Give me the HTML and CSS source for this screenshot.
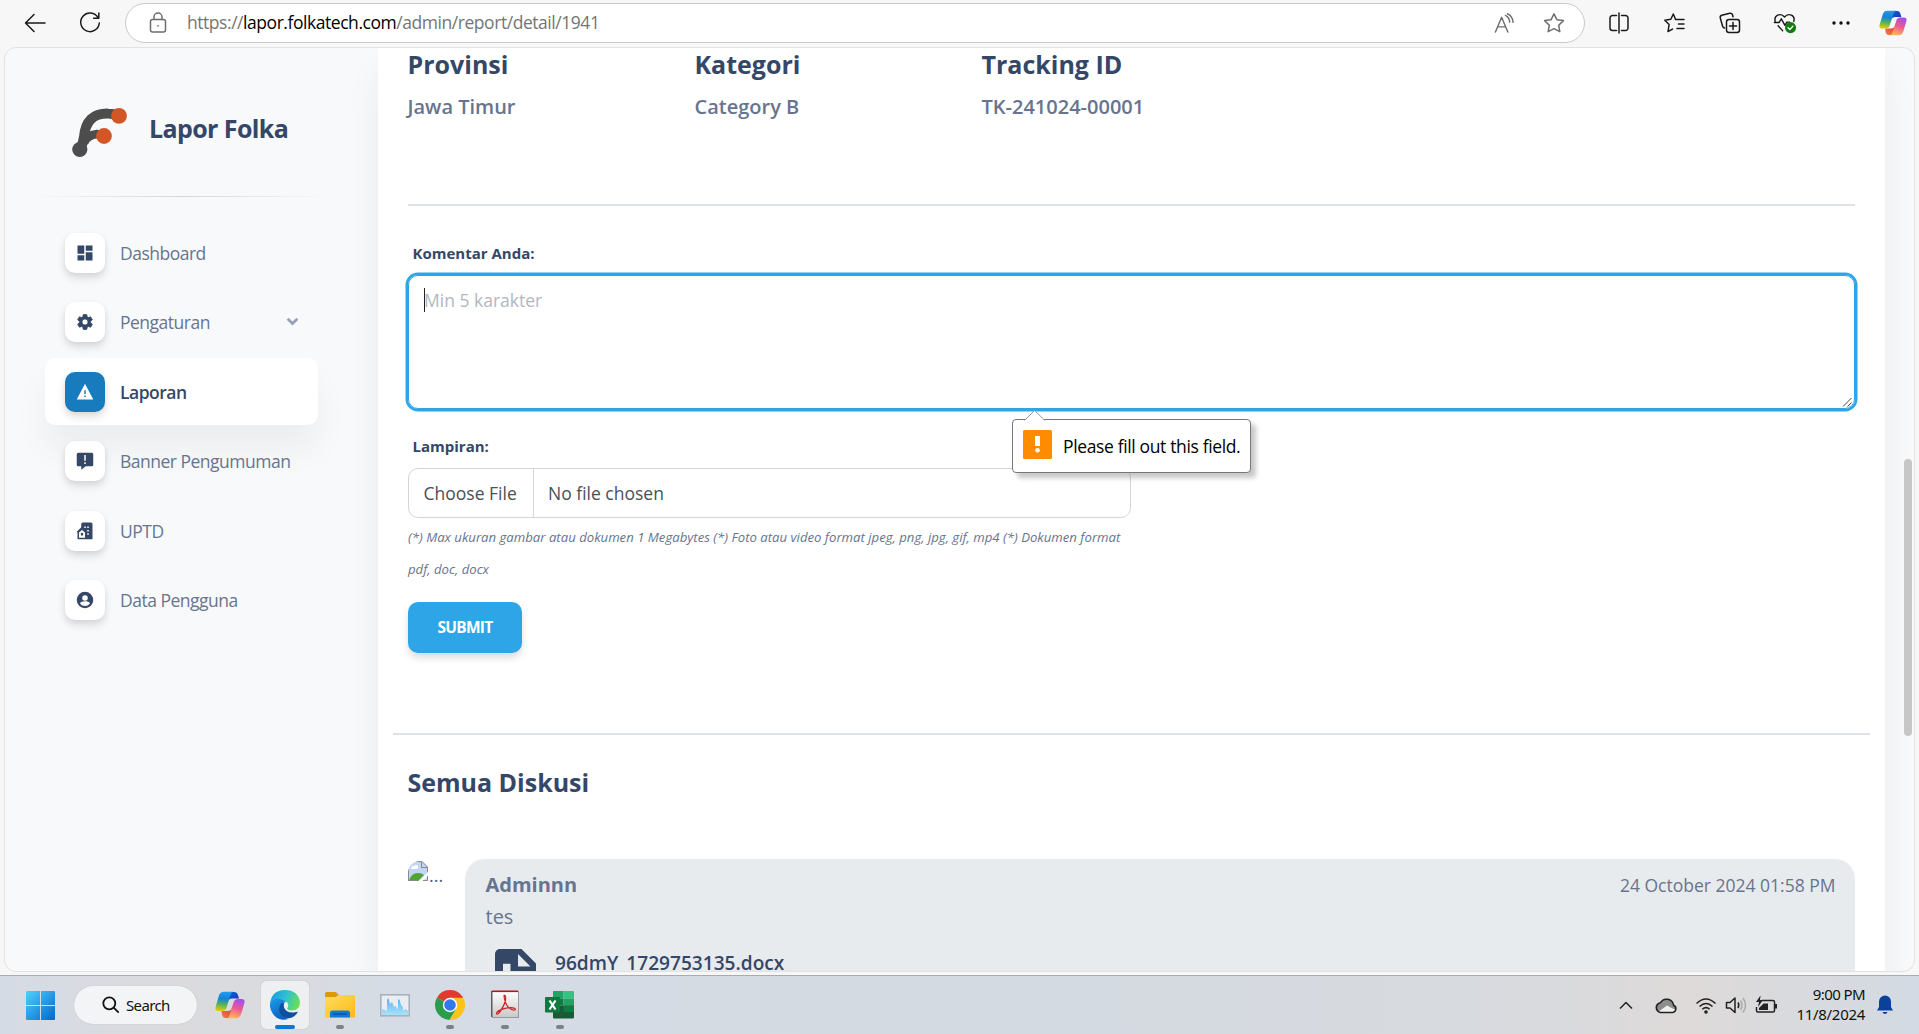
FILE: index.html
```html
<!DOCTYPE html>
<html lang="id">
<head>
<meta charset="utf-8">
<title>Lapor Folka</title>
<link rel="stylesheet" href="styles.css">
</head>
<body>
<svg class="defs" width="0" height="0">
  <defs>
    <linearGradient id="cpA" x1="0.3" y1="0" x2="0.2" y2="1"><stop offset="0" stop-color="#1a9bf0"/><stop offset=".35" stop-color="#1583d8"/><stop offset=".65" stop-color="#52b45c"/><stop offset="1" stop-color="#f6c900"/></linearGradient>
    <linearGradient id="cpB" x1="0.7" y1="0" x2="0.4" y2="1"><stop offset="0" stop-color="#a04df0"/><stop offset=".5" stop-color="#ee5a90"/><stop offset="1" stop-color="#ffb657"/></linearGradient>
    <linearGradient id="cpC" x1="0" y1="0" x2="1" y2="1"><stop offset="0" stop-color="#0d63d6"/><stop offset="1" stop-color="#1b2fb5"/></linearGradient>
    <linearGradient id="cpD" x1="0" y1="1" x2="1" y2="0"><stop offset="0" stop-color="#f7803c"/><stop offset="1" stop-color="#e0393f"/></linearGradient>
    <linearGradient id="win" x1="0" y1="0" x2="1" y2="1"><stop offset="0" stop-color="#50d0ff"/><stop offset="1" stop-color="#0068cc"/></linearGradient>
    <linearGradient id="edA" x1="0" y1="0.3" x2="1" y2="0.6"><stop offset="0" stop-color="#1d9be0"/><stop offset=".5" stop-color="#2fc1cf"/><stop offset="1" stop-color="#6ee04e"/></linearGradient>
    <linearGradient id="edB" x1="0" y1="0" x2="0.5" y2="1"><stop offset="0" stop-color="#1c9bea"/><stop offset="1" stop-color="#0a62c0"/></linearGradient>
    <linearGradient id="fold" x1="0" y1="0" x2="1" y2="1"><stop offset="0" stop-color="#ffdc62"/><stop offset="1" stop-color="#fdbb14"/></linearGradient>
    <linearGradient id="perf" x1="0" y1="0" x2="0" y2="1"><stop offset="0" stop-color="#55b4ee"/><stop offset="1" stop-color="#a9e2fb"/></linearGradient>
    <linearGradient id="pdf" x1="0" y1="0" x2="0" y2="1"><stop offset="0" stop-color="#fff"/><stop offset="1" stop-color="#c9c9c9"/></linearGradient>
    <symbol id="copilot" viewBox="0 0 30 28">
      <path d="M15 1h4.500q2.500 0 3.300 2.600l1.200 4H17q-3 0-4 3z" fill="url(#cpC)"/>
      <path d="M15 27h-4.500q-2.500 0-3.300-2.600L6.500 20H13q3 0 4-3z" fill="url(#cpD)"/>
      <path d="M9 .8h9.500q-2 0-3 3.200l-4 12.500q-1 3.500-4.500 3.500H3.500Q-.3 20 .6 16L4 4.500Q5.200.8 9 .8z" fill="url(#cpA)"/>
      <path d="M21 27.200h-9.500q2 0 3-3.200l4-12.500Q19.500 8 23 8h3.500q3.800 0 2.900 4L26 23.500q-1.200 3.700-5 3.700z" fill="url(#cpB)"/>
    </symbol>
  </defs>
</svg>

<header class="toolbar">
  <svg class="tb-back" viewBox="0 0 24 24"><path d="M22 12H3M11 3.500L2.500 12l8.500 8.500"/></svg>
  <svg class="tb-reload" viewBox="0 0 24 24"><path d="M20 6.500A9.300 9.300 0 1 0 21.300 12M20.800 2v5.200h-5.200"/></svg>
  <div class="address">
    <svg class="lock" viewBox="0 0 18 22"><rect x="1.500" y="7.500" width="15" height="12.500" rx="2"/><path d="M5 7.500V5a4 4 0 0 1 8 0v2.500"/><circle cx="9" cy="13.800" r=".9" class="dot"/></svg>
    <span class="url">https://<b>lapor.folkatech.com</b>/admin/report/detail/1941</span>
    <svg class="read" viewBox="0 0 22 22"><path d="M1.500 20L8 4.500 14.500 20M4 14.500h8M12 2.500q4 2 4.500 7M14 .8q5.500 2.200 6 9"/></svg>
    <svg class="star" viewBox="0 0 22 22"><path d="M11 1.800l2.900 5.900 6.500.9-4.700 4.600 1.100 6.500-5.800-3-5.800 3 1.100-6.500L1.600 8.600l6.500-.9z"/></svg>
  </div>
  <nav class="tb-tools">
    <svg viewBox="0 0 24 24"><path d="M9.500 4.500H5.500a2.500 2.500 0 0 0-2.500 2.500v10a2.500 2.500 0 0 0 2.500 2.500h4M14.500 4.500h4a2.500 2.500 0 0 1 2.500 2.500v10a2.500 2.500 0 0 1-2.500 2.500h-4M12 2v20"/></svg>
    <svg viewBox="0 0 24 24"><path d="M13.500 8.500H22M16.500 13H22M15 17.500h7M14 8.500h-.4L11.300 3 8.800 8.300l-6 .9 4.300 4.300L6 20.500l4.500-2.400"/></svg>
    <svg viewBox="0 0 24 24"><rect x="8.500" y="8.500" width="13" height="13" rx="2.500"/><path d="M15 11.500v7M11.500 15h7M6.500 17q-1.500-.3-2-2L2.300 7q-.5-2 1.500-2.700l8-2.100q2-.4 2.700 1.600l.5 2"/></svg>
    <svg viewBox="0 0 26 24"><path d="M2.500 11Q1 5.500 5 3.500q4.500-1.700 7.500 2 3-3.700 7.500-2 4 2 2.500 7M1.500 11.500h5l2.500-4 4 7 2-3.500h3M5.500 15l5 5.500"/><circle cx="19" cy="17" r="6" fill="#107c10" stroke="none"/><path d="M16.300 17.200l2 1.800 3.300-3.600" stroke="#fff"/></svg>
    <svg viewBox="0 0 24 24"><g fill="#111" stroke="none"><circle cx="5" cy="12" r="1.700"/><circle cx="12" cy="12" r="1.700"/><circle cx="19" cy="12" r="1.700"/></g></svg>
    <svg class="tb-copilot" viewBox="0 0 30 28"><use href="#copilot"/></svg>
  </nav>
</header>

<div class="page">
  <aside class="sidebar">
    <div class="brand">
      <svg viewBox="0 0 56 54"><path d="M8 42Q11 37 12 30Q14 6 36 6.500Q41 6.500 46 9" stroke-width="10"/><path d="M12 36Q15 28 25 27L30 28" stroke-width="8.500"/><circle cx="7.800" cy="42.500" r="7.600" fill="#4d4d4d"/><circle cx="47" cy="8.800" r="7.900" fill="#d35626"/><circle cx="32" cy="29" r="7.900" fill="#d35626"/></svg>
      <span>Lapor Folka</span>
    </div>
    <div class="side-rule"></div>
    <ul class="menu">
      <li><i><svg viewBox="0 0 24 24"><path d="M2 13h9V2H2zM2 22h9v-7H2zM13 22h9V11h-9zM13 2v7h9V2z"/></svg></i><span>Dashboard</span></li>
      <li><i><svg viewBox="0 0 24 24"><path d="M19.430 12.980c.04-.32.07-.64.07-.98s-.03-.66-.07-.98l2.110-1.650a.5.5 0 0 0 .12-.64l-2-3.460a.5.5 0 0 0-.61-.22l-2.490 1a7.300 7.300 0 0 0-1.690-.98l-.38-2.650A.49.49 0 0 0 14 2h-4a.49.49 0 0 0-.49.42l-.38 2.650c-.61.250-1.170.59-1.690.98l-2.490-1a.49.49 0 0 0-.61.22l-2 3.460a.49.49 0 0 0 .12.64l2.110 1.650c-.04.320-.07.650-.07.980s.03.660.07.980l-2.110 1.650a.5.5 0 0 0-.12.640l2 3.460c.12.220.390.300.610.220l2.490-1c.52.400 1.080.730 1.690.98l.38 2.650c.03.240.240.420.490.420h4c.25 0 .46-.18.490-.42l.38-2.650a7.300 7.300 0 0 0 1.690-.98l2.490 1c.23.090.490 0 .610-.22l2-3.460a.5.5 0 0 0-.12-.64zM12 16a4 4 0 1 1 0-8 4 4 0 0 1 0 8z" stroke="#344767" stroke-width="1"/></svg></i><span>Pengaturan</span><svg class="chev" viewBox="0 0 12 8"><path d="M1.500 1.500L6 5.800l4.500-4.300"/></svg></li>
      <li class="active"><i><svg viewBox="0 0 24 24"><path d="M1 22h22L12 1zM13 18.500h-2v-2h2zM13 14.500h-2v-5h2z" fill-rule="evenodd"/></svg></i><span>Laporan</span></li>
      <li><i><svg viewBox="0 0 24 24"><path fill-rule="evenodd" d="M3 1h18a2 2 0 0 1 2 2v14a2 2 0 0 1-2 2h-8l-6 4.500V19H3a2 2 0 0 1-2-2V3a2 2 0 0 1 2-2zM11 4v7.500h2V4zM11 13.500v2.500h2v-2.500z"/></svg></i><span>Banner Pengumuman</span></li>
      <li><i><svg viewBox="0 0 24 24"><path d="M9 .5h11a2 2 0 0 1 2 2V23H2V14l-1-1 6-6V2.500a2 2 0 0 1 2-2z"/><path fill="#fff" d="M11 6h2v2h-2zM15 6h2v2h-2zM15 10.500h2v2h-2zM15 15h2v2h-2zM4 14l4-3.500 4 3.500v7H4z"/><path d="M6.500 14.500h3V18h-3z"/></svg></i><span>UPTD</span></li>
      <li><i><svg viewBox="0 0 24 24"><path fill-rule="evenodd" d="M12 1a11 11 0 1 0 0 22 11 11 0 0 0 0-22zm0 4.500a3.700 3.700 0 1 1 0 7.400 3.700 3.700 0 0 1 0-7.400zm0 14.500a8 8 0 0 1-6.600-3.500c.03-2.100 4.400-3 6.600-3s6.570.9 6.600 3A8 8 0 0 1 12 20z"/></svg></i><span>Data Pengguna</span></li>
    </ul>
  </aside>

  <main class="card">
    <section class="facts">
      <div><h3>Provinsi</h3><p>Jawa Timur</p></div>
      <div><h3>Kategori</h3><p>Category B</p></div>
      <div><h3>Tracking ID</h3><p>TK-241024-00001</p></div>
    </section>
    <div class="rule"></div>
    <form class="comment">
      <label>Komentar Anda:</label>
      <div class="textarea">
        <span class="caret"></span><span class="placeholder">Min 5 karakter</span>
        <svg class="grip" viewBox="0 0 10 10"><path d="M1 9.500L9.500 1M5.500 9.500l4-4"/></svg>
        <div class="tip">
          <svg class="tip-arrow" viewBox="0 0 22 11"><path d="M.5 10.500L10.500.5l10.500 10" /></svg>
          <svg class="tip-icon" viewBox="0 0 29 29"><rect width="29" height="29" rx="1.500" fill="#ff8c00"/><path d="M12 6h5v10h-5z" fill="#fff"/><circle cx="14.500" cy="20.300" r="2.300" fill="#fff"/></svg>
          <span>Please fill out this field.</span>
        </div>
      </div>
      <label>Lampiran:</label>
      <div class="file"><span class="choose">Choose File</span><span class="none">No file chosen</span></div>
      <p class="hint">(*) Max ukuran gambar atau dokumen 1 Megabytes <span>(*) Foto atau video format jpeg, png, jpg, gif, mp4</span> <span>(*) Dokumen format<br>pdf, doc, docx</span></p>
      <button type="button" class="submit">SUBMIT</button>
    </form>
    <div class="rule wide"></div>
    <h3 class="disc-title">Semua Diskusi</h3>
    <section class="thread">
      <div class="avatar">
        <svg viewBox="0 0 20 20"><path d="M0 0h14l6 6v14H0z" fill="#c3d5f5"/><path d="M3 8q0-3 3-3 2-2 4 0 1 2-1 3z" fill="#fff"/><path d="M1 20q2-8 9-8 4 0 6 2l-6 6z" fill="#4fa52f"/><path d="M11 20l9-9v4l-5 5z" fill="#fff"/><path d="M.5 20V.5H14L19.500 6v5M19.500 15v4.500H15M9 19.500H0M13.500.5v6h6" fill="none" stroke="#8a8a8a"/></svg>
        <span>...</span>
      </div>
      <article class="bubble">
        <div class="b-head"><b>Adminnn</b><time>24 October 2024 01:58 PM</time></div>
        <p>tes</p>
        <div class="attach">
          <svg viewBox="0 0 41 50"><path fill-rule="evenodd" d="M5 0h21.500L41 14.500V50H0V5a5 5 0 0 1 5-5zM23 5v12.500h12.500zM8 14.800h7.500V23H8z"/></svg>
          <span>96dmY_1729753135.docx</span>
        </div>
      </article>
    </section>
  </main>
  <div class="scroll"></div>
</div>

<footer class="taskbar">
  <svg class="start" viewBox="0 0 29 29"><path fill="url(#win)" d="M1 0h13v14H0V1a1 1 0 0 1 1-1zM15 0h13a1 1 0 0 1 1 1v13H15zM0 15h14v14H1a1 1 0 0 1-1-1zM15 15h14v13a1 1 0 0 1-1 1H15z"/></svg>
  <div class="search"><svg viewBox="0 0 18 18"><circle cx="7.300" cy="7.300" r="6"/><path d="M11.700 11.700l5 5"/></svg><span>Search</span></div>
  <div class="apps">
    <div><svg viewBox="0 0 30 28" height="28"><use href="#copilot"/></svg></div>
    <div class="on"><svg viewBox="0 0 30 30"><path d="M0 14Q1.500 0 15 0q13 0 15 12 0 8.500-8 8.500-4.500 0-4.800-2 1.800-2 .8-5-1-2-4-2.500Q4 8 0 14z" fill="url(#edA)"/><path d="M0 14Q3 7.500 10 9q4.500 1 6 3-6 1-5.500 7 1 7 8 10Q9 32 3 24-.5 19 0 14z" fill="url(#edB)"/><path d="M11 13.500q-4.500 7 1.500 12.500 6 4.500 12 0 2.500-2 3.300-4.300-.8-.2-3 .6-7.300 1.200-10.300-3.800-1.500-3 0-6z" fill="#0c50a0"/></svg><em></em></div>
    <div class="run"><svg viewBox="0 0 30 30"><path d="M1.500 2H10q1.500 0 2.500 1.500T15 5v3H0V3.500Q0 2 1.500 2z" fill="#dc9b06"/><path d="M0 7h10.500L14 5h14.500Q30 5 30 6.500V27.500H0z" fill="url(#fold)"/><path d="M5 27.500V23q0-2.500 2.500-2.500h15q2.500 0 2.500 2.500v4.500z" fill="#0f7ad3"/><path d="M8 24h14" stroke="#0a4c90" stroke-width="1.300"/></svg><em></em></div>
    <div><svg viewBox="0 0 30 30"><rect x=".8" y="4.800" width="28.400" height="21" fill="#e9eef2" stroke="#a3afbb" stroke-width="1.500"/><path d="M2 25v-6l3 1 2 1V10l1.500-2 1.500 6 2-2 2 5 2-1 1 4 1-3V9.500h1.500L21 15l2 2v4l2-2 2 1 1 1v4z" fill="url(#perf)"/></svg></div>
    <div class="run"><svg viewBox="0 0 30 30"><path d="M15 15L2 7.500A15 15 0 0 1 28 7.500z" fill="#df3a2e"/><path d="M15 15L2 7.500A15 15 0 0 0 14.500 30l7-11.500z" fill="#2a9c4c"/><path d="M15 15V7.500h13A15 15 0 0 1 14.500 30l7-11.500z" fill="#fcc31c"/><path d="M15 7.500h13L27 6H10z" fill="#df3a2e"/><circle cx="15" cy="15" r="7.200" fill="#fff"/><circle cx="15" cy="15" r="5.800" fill="#2f79ee"/></svg><em></em></div>
    <div class="run"><svg viewBox="0 0 30 30"><path d="M2 1h27v27H2z" fill="#9a9a9a"/><path d="M1 1h26.500v26H1z" fill="#5c5c5c"/><path d="M2.500 1.500H28v25.500H2.500z" fill="url(#pdf)"/><path d="M2 .5h26v1.600H2z" fill="#c40f12"/><path d="M14 5.500Q16 4.500 15.500 10 14 17 8.500 23.500 6.500 25 6.500 23 8 20 16 18.200T25.500 19.500Q24 21.500 19 18 14.500 13.500 14 5.500z" fill="none" stroke="#cf2127" stroke-width="1.200"/></svg><em></em></div>
    <div class="run"><svg viewBox="0 0 30 30"><path d="M8 1h10.500v7.500H8z" fill="#21a366"/><path d="M18.500 1H28q1 0 1 1v6.500H18.500z" fill="#33c481"/><path d="M8 8.500h10.500v7H8z" fill="#107c41"/><path d="M18.500 8.500H29v7H18.500z" fill="#21a366"/><path d="M8 15.500h21V27q0 1.500-1 1.500H9q-1 0-1-1z" fill="#185c37"/><path d="M18.500 15.500H29V22H18.500z" fill="#107c41"/><rect y="7" width="15" height="15.500" rx="1" fill="#0f7a40"/><path d="M4.500 10.500l6 9M10.500 10.500l-6 9" stroke="#fff" stroke-width="2.200"/></svg><em></em></div>
  </div>
  <div class="tray">
    <svg viewBox="0 0 24 24" class="t-chev"><path d="M6 15.500l6-6 6 6"/></svg>
    <svg viewBox="0 0 24 24" class="t-cloud"><path d="M6 19.500h12.500a3.800 3.800 0 0 0 1-7.500 7 7 0 0 0-13-2.500A5 5 0 0 0 6 19.500z" fill="#8d8d8d" stroke="none"/><path d="M4 19l9-6.500 8.500 4.500-2 2.500z" fill="#f0f0f0" stroke="none"/><path d="M6.500 19.500h12a3.800 3.800 0 0 0 1-7.300 7 7 0 0 0-13-2.500 5 5 0 0 0 0 9.800z"/></svg>
    <svg viewBox="0 0 24 24" class="t-wifi"><path d="M2.500 10.500Q12 1.500 21.500 10.500M5.500 13.500Q12 7.500 18.500 13.500M8.300 16.300Q12 13 15.700 16.300"/><circle cx="12" cy="19" r="1.800" fill="#222" stroke="none"/></svg>
    <svg viewBox="0 0 24 24" class="t-vol"><path d="M2.500 9.500h3.500l5-4.500v14.500l-5-4.500H2.500zM14 9.500q1.700 2.700 0 5.500"/><path d="M16.500 7.500q3 4.500 0 9.500M19 5q5 7 0 14.500" stroke="#aaa"/></svg>
    <svg viewBox="0 0 24 24" class="t-bat"><path d="M8 7.500h11q1.500 0 1.500 1.500v8.500q0 1.500-1.500 1.500H4q-1.500 0-1.500-1.500V14"/><path d="M21 11h2v4.500h-2zM5 17h9v-6.500H9.500L5 15z" fill="#222" stroke="none"/><path d="M6.500 2.500L2 9h3l-1 5 5-7H6z" fill="#222" stroke="none"/></svg>
    <div class="clock"><span>9:00 PM</span><span class="date">11/8/2024</span></div>
    <svg viewBox="0 0 16 20" class="t-bell"><path d="M8 .5a6 6 0 0 1 6 6v5.500l2 3.500H0L2 12V6.500a6 6 0 0 1 6-6zM5.500 17h5q-.5 2-2.500 2t-2.500-2z" fill="#0a419a" stroke="none"/></svg>
  </div>
</footer>
</body>
</html>
```
FILE: styles.css
```css
* { box-sizing: border-box; }
body { margin: 0; width: 1919px; height: 1034px; overflow: hidden; display: flex; flex-direction: column; background: #f7f7f7; font-family: "Open Sans", "Noto Sans", sans-serif; font-size: 20px; color: #67748e; }
h3, p, ul { margin: 0; padding: 0; }
svg { display: block; flex: none; }
.defs { position: absolute; }

/* browser toolbar */
.toolbar { height: 47px; flex: none; display: flex; align-items: center; padding-left: 23px; }
.toolbar svg { fill: none; stroke: #1a1a1a; stroke-width: 1.500; stroke-linecap: round; stroke-linejoin: round; margin-top: -2px; }
.tb-back { width: 24px; height: 24px; }
.tb-reload { width: 24px; height: 24px; margin-left: 31px; }
.address { width: 1460px; height: 40px; margin: -1px 0 0 23px; border: 1px solid #c9c9c9; border-radius: 20px; background: #fff; display: flex; align-items: center; padding-left: 23px; }
.address svg { stroke: #6e6e6e; margin-top: 0; }
.lock { width: 18px; height: 22px; }
.lock .dot { fill: #6e6e6e; stroke: none; }
.url { margin: -2px 0 0 20px; width: 1307px; font-size: 17.500px; color: #757575; letter-spacing: -0.450px; white-space: nowrap; }
.url b { font-weight: 400; color: #000; }
.read { width: 21px; height: 21px; }
.star { width: 22px; height: 22px; margin-left: 28px; }
.tb-tools { display: flex; align-items: center; margin-left: 22px; gap: 31.400px; }
.tb-tools svg { width: 24px; height: 24px; }
.tb-tools .tb-copilot { width: 28px; height: 26px; stroke: none; margin-left: -5px; }

/* web page frame */
.page { margin: 0 4px 0 4px; height: 925px; flex: none; display: flex; border: 1px solid #e2e2e2; border-radius: 12px; background: #f8f9fb; overflow: hidden; position: relative; }
.sidebar { width: 373px; flex: none; }
.brand { display: flex; align-items: center; margin: 59px 0 0 67px; height: 54px; gap: 21px; font-size: 25px; font-weight: 700; color: #344767; letter-spacing: -0.600px; }
.brand svg { width: 56px; height: 54px; fill: none; stroke: #4d4d4d; }
.brand svg circle { stroke: none; }
.brand span { margin-top: -13px; }
.side-rule { height: 1px; margin: 35px 47px 0 28px; background: linear-gradient(90deg, transparent, #d4d6d9, transparent); }
.menu { list-style: none; margin: 22px 0 0 40px; width: 273px; display: flex; flex-direction: column; gap: 2.500px; }
.menu li { height: 67px; border-radius: 10px; display: flex; align-items: center; padding-left: 20px; font-size: 17.500px; letter-spacing: -0.500px; position: relative; }
.menu i { width: 40px; height: 40px; border-radius: 10px; background: #fff; display: flex; align-items: center; justify-content: center; margin-right: 15px; box-shadow: 0 5px 8px rgba(20, 20, 20, .12), 0 2px 5px rgba(20, 20, 20, .05); }
.menu i svg { width: 18px; height: 18px; fill: #344767; }
.menu .chev { width: 13px; height: 9px; margin: -2px 19px 0 auto; fill: none; stroke: #99a1ba; stroke-width: 2.600; }
.menu .active { background: #fff; color: #344767; font-weight: 600; box-shadow: 0 24px 34px rgba(0, 0, 0, .05); }
.menu .active i { background: #187bbd; }
.menu .active i svg { fill: #fff; }

/* report card */
.card { width: 1507px; flex: none; background: #fff; box-shadow: 0 25px 34px rgba(0, 0, 0, .06); padding: 0 30px; }
.facts { display: flex; margin-top: -1px; height: 157px; }
.facts div { width: 287px; }
h3 { font-size: 25px; line-height: 34px; font-weight: 700; color: #344767; margin-left: -0.500px; }
.facts p { margin: 10px 0 0 -0.500px; line-height: 32px; font-weight: 600; white-space: nowrap; }
.rule { height: 2px; background: #dee2e6; }
.rule.wide { margin: 0 -15px; }
.comment { height: 527px; padding-top: 35px; }
.comment label { display: block; font-size: 15px; line-height: 24px; font-weight: 700; color: #344767; margin-left: 4.500px; }
.textarea { position: relative; height: 134px; margin: 10px 0 25px; border: 1px solid #2ea5e7; border-radius: 10px; box-shadow: 0 0 0 2.500px #2ea5e7; padding: 12px 15px; display: flex; align-items: flex-start; font-size: 17.500px; line-height: 24px; color: #b1b7bf; }
.caret { width: 1px; height: 24px; margin-right: -1px; background: #222; }
.grip { position: absolute; right: 2px; bottom: 1px; width: 10px; height: 10px; stroke: #444; fill: none; }
.tip { position: absolute; left: 603px; top: 143px; width: 239px; height: 54px; border: 1px solid #777; border-radius: 4px; background: #fff; box-shadow: 5px 5px 5px rgba(0, 0, 0, .22); display: flex; align-items: center; padding-left: 10px; font-size: 17.500px; letter-spacing: -0.360px; color: #000; white-space: nowrap; }
.tip-icon { width: 29px; height: 29px; margin-right: 11px; margin-top: -4px; }
.tip-arrow { position: absolute; left: 11px; top: -10px; width: 22px; height: 11px; fill: #fff; stroke: #999; }
.file { width: 723px; height: 50px; margin-top: 10px; border: 1px solid #d2d6da; border-radius: 10px; display: flex; font-size: 17.500px; line-height: 48px; color: #495057; }
.choose { width: 124.500px; padding-left: 14.500px; border-right: 1px solid #d2d6da; }
.none { padding-left: 14.500px; }
.hint { margin-top: 3px; font-size: 13.170px; line-height: 32px; font-style: italic; white-space: nowrap; }
.submit { margin-top: 17px; width: 114px; height: 51px; padding: 0 0 2px; border: 0; border-radius: 10px; background: #2ea5e7; color: #fff; font: 700 15.500px "Open Sans", sans-serif; letter-spacing: -0.750px; box-shadow: 0 5px 9px -1px rgba(0, 0, 0, .16); }
.disc-title { margin-top: 30px; }
.thread { display: flex; margin-top: 60px; }
.avatar { width: 57px; display: flex; padding-top: 2px; }
.avatar svg { width: 20px; height: 20px; border-radius: 12px 0 0 0; }
.avatar span { font-size: 18px; line-height: 26px; color: #555f75; margin: 1px 0 0 1px; }
.bubble { width: 1390px; height: 140px; border-radius: 20px; background: #e8ebee; padding: 10px 19.500px 0 20.500px; line-height: 32px; }
.b-head { display: flex; justify-content: space-between; }
.b-head time { font-size: 17.500px; }
.attach { display: flex; margin: 16px 0 0 9.500px; }
.attach svg { width: 41px; height: 50px; fill: #344767; }
.attach span { margin: -2px 0 0 19px; font-size: 19.100px; font-weight: 600; color: #344767; }
.scroll { position: absolute; right: 2px; top: 411px; width: 8px; height: 277px; border-radius: 4px; background: #c7c7c7; }

/* system taskbar */
.taskbar { margin-top: 3px; height: 59px; flex: none; display: flex; align-items: center; border-top: 1px solid #a9abad; background: linear-gradient(90deg, #d5dbe5 0, #dbdbde 9%, #d9dbdf 15%, #d5dce5 20%, #d3dae2 50%, #d8dade 80%, #dedad9 88%, #d9dadd 93%, #d3dae3 100%); font-family: "Noto Sans", "Open Sans", sans-serif; color: #111; }
.start { width: 29px; height: 29px; margin-left: 26px; }
.search { margin-left: 19px; width: 123px; height: 38px; border-radius: 19px; background: #f3f4f6; box-shadow: 0 0 1px #aaa; display: flex; align-items: center; padding-left: 28px; font-size: 15px; letter-spacing: -0.650px; }
.search svg { width: 18px; height: 18px; margin-right: 6px; fill: none; stroke: #111; stroke-width: 1.800; }
.apps { display: flex; gap: 7px; margin-left: 9px; }
.apps div { width: 48px; height: 48px; border-radius: 5px; display: flex; align-items: center; justify-content: center; position: relative; }
.apps .on { background: #eeeff1; box-shadow: 0 0 1px #999; }
.apps svg { width: 30px; }
.apps em { position: absolute; bottom: 0; left: 20px; width: 8px; height: 4px; border-radius: 2px; background: #7e8287; }
.apps .on em { left: 14px; width: 20px; background: #0a78d6; }
.tray { margin-left: auto; display: flex; align-items: center; padding-right: 26px; }
.tray svg { width: 24px; height: 24px; fill: none; stroke: #222; stroke-width: 1.500; stroke-linejoin: round; margin-top: -1px; }
.tray .t-cloud { margin-left: 16px; }
.tray .t-wifi { margin-left: 16px; }
.tray .t-vol { margin-left: 6px; }
.tray .t-bat { margin-left: 6px; }
.clock { width: 78px; margin: -3px 12px 0 9px; display: flex; flex-direction: column; align-items: flex-end; font-size: 15px; line-height: 20px; letter-spacing: -0.600px; }
.clock .date { letter-spacing: -0.300px; }
.tray .t-bell { width: 16px; height: 20px; }
```
